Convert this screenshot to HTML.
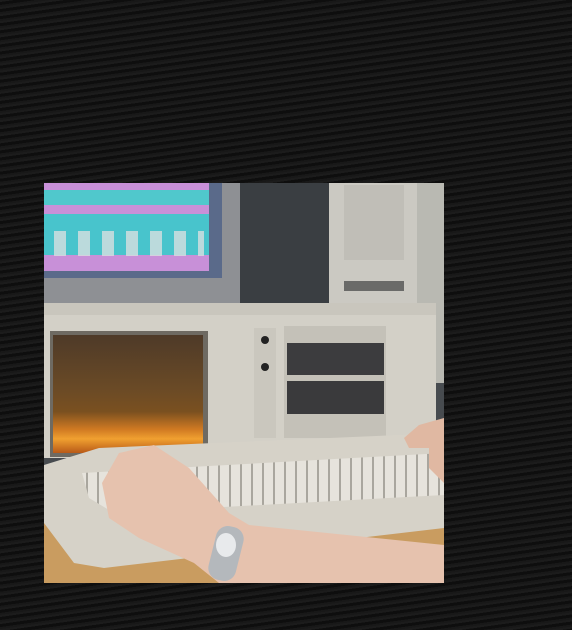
<!DOCTYPE html>
<html><head><style>
html,body{margin:0;padding:0}
body{width:572px;height:630px;overflow:hidden;position:relative;
background:#151515;
background-image:repeating-linear-gradient(172deg,#1c1c1c 0 2px,#0e0e0e 2px 5px,#181818 5px 7px);}
#p{position:absolute;left:44px;top:183px;width:400px;height:400px;overflow:hidden;background:#474b4f}
#p div{position:absolute}
</style></head><body>
<div id="p">
  <div style="left:195px;top:0;width:100px;height:125px;background:#3a3e42"></div>
  <div style="left:0;top:0;width:196px;height:122px;background:#8e9094"></div>
  <div style="left:0;top:0;width:178px;height:95px;background:#5a6a8a"></div>
  <div style="left:0;top:0;width:165px;height:88px;background:linear-gradient(#c890d8 0 8%,#50c8cc 8% 25%,#c890d8 25% 35%,#48c4cc 35% 82%,#c890d8 82%)"></div>
  <div style="left:10px;top:48px;width:150px;height:25px;background:repeating-linear-gradient(90deg,#d8e0e0 0 12px,transparent 12px 24px);opacity:.8"></div>
  <div style="left:285px;top:0;width:88px;height:122px;background:#cbc9c2"></div>
  <div style="left:300px;top:2px;width:60px;height:75px;background:#c0beb7"></div>
  <div style="left:300px;top:98px;width:60px;height:10px;background:#6a6a68"></div>
  <div style="left:373px;top:0;width:27px;height:200px;background:#b9b9b2"></div>
  <div style="left:0;top:120px;width:392px;height:155px;background:#d3d0c7"></div>
  <div style="left:0;top:120px;width:392px;height:12px;background:#c9c6bd"></div>
  <div style="left:6px;top:148px;width:158px;height:126px;background:#6e6a62"></div>
  <div style="left:9px;top:152px;width:150px;height:118px;background:linear-gradient(#4e3a28,#6a4a26 45%,#7a5020 65%,#d07a22 80%,#f0a030 88%,#b85a18)"></div>
  <div style="left:210px;top:145px;width:22px;height:110px;background:#cac7be"></div>
  <div style="left:217px;top:153px;width:8px;height:8px;border-radius:50%;background:#222"></div>
  <div style="left:217px;top:180px;width:8px;height:8px;border-radius:50%;background:#222"></div>
  <div style="left:240px;top:143px;width:102px;height:112px;background:#c4c1b8"></div>
  <div style="left:243px;top:160px;width:97px;height:32px;background:#3c3c3e"></div>
  <div style="left:243px;top:198px;width:97px;height:33px;background:#3a3a3c"></div>
  <div style="left:0;top:300px;width:400px;height:100px;background:#c99c60"></div>
  <div style="left:0;top:0;width:400px;height:400px;background:#d6d2c8;clip-path:polygon(0 282px,55px 265px,400px 250px,400px 345px,60px 385px,30px 380px,0 340px)"></div>
  <div style="left:0;top:0;width:400px;height:400px;background:repeating-linear-gradient(90deg,#e6e3dc 0 9px,#a9a69e 9px 11px);clip-path:polygon(38px 290px,400px 270px,400px 312px,70px 330px,45px 315px)"></div>
  <div style="left:0;top:0;width:400px;height:400px;background:#e6c2ae;clip-path:polygon(75px 270px,110px 262px,145px 285px,185px 330px,205px 342px,400px 362px,400px 400px,175px 400px,150px 380px,95px 355px,65px 335px,58px 300px)"></div>
  <div style="left:0;top:0;width:400px;height:400px;background:#e0b8a2;clip-path:polygon(400px 235px,375px 242px,360px 255px,365px 265px,385px 265px,385px 285px,400px 300px)"></div>
  <div style="left:168px;top:343px;width:28px;height:55px;background:#b4b8bc;border-radius:12px;transform:rotate(14deg)"></div>
  <div style="left:172px;top:350px;width:20px;height:24px;background:#e8eaec;border-radius:50%"></div>
</div>
</body></html>
